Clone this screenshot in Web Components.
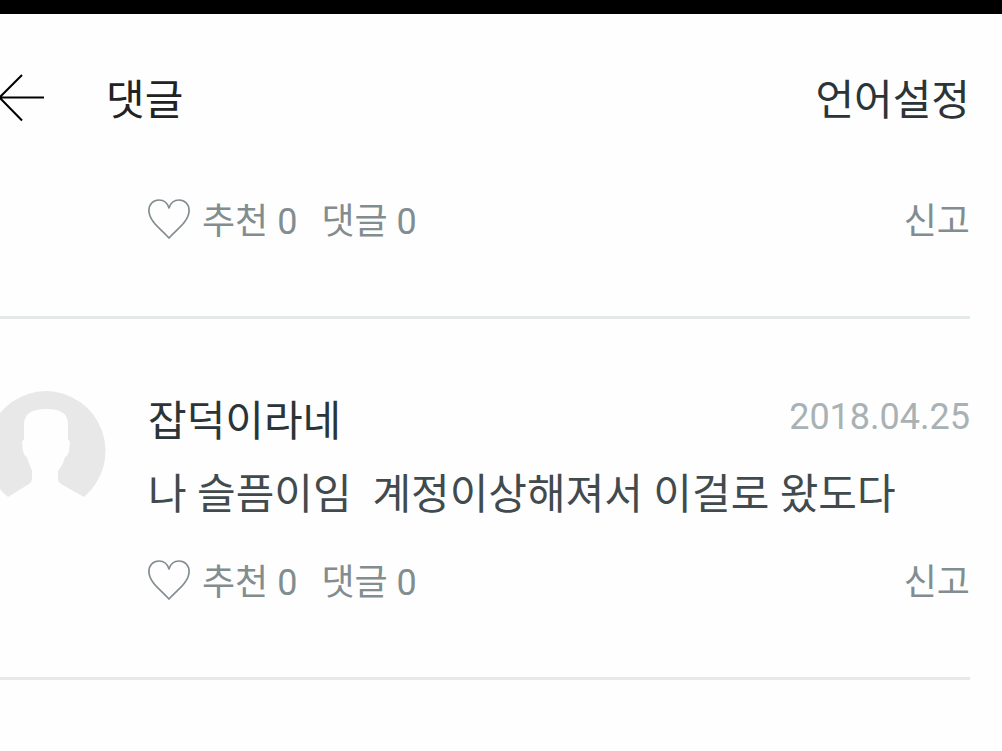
<!DOCTYPE html>
<html lang="ko">
<head>
<meta charset="utf-8">
<meta name="viewport" content="width=device-width, initial-scale=1">
<title>댓글</title>
<style>
body { margin: 0; background: #fefefe; font-family: Roboto, "Noto Sans CJK KR", sans-serif; }
</style>
</head>
<body>
<comment-page>
  <page-header>댓글<span slot="action">언어설정</span></page-header>
  <comment-item likes="0" replies="0"></comment-item>
  <comment-item likes="0" replies="0" author="잡덕이라네" date="2018.04.25">나 슬픔이임  계정이상해져서 이걸로 왔도다</comment-item>
</comment-page>
<script>
const define = (name, html, setup) => customElements.define(name, class extends HTMLElement {
  connectedCallback() {
    if (this.shadowRoot) return;
    const t = document.createElement('template');
    t.innerHTML = html;
    this.attachShadow({ mode: 'open' }).append(t.content.cloneNode(true));
    if (setup) setup(this, this.shadowRoot);
  }
});

define('comment-page', `
<style>
:host { display: block; border-top: 14px solid #000; }
main { display: block; }
</style>
<main><slot></slot></main>`);

define('page-header', `
<style>
:host { display: flex; align-items: center; height: 168px; padding-right: 32px; color: #222; }
button { font: inherit; color: inherit; background: none; border: 0; padding: 0; cursor: pointer; }
.back { display: flex; width: 106px; color: #000; }
h1 { flex: 1; margin: 0; padding-top: 6px; font-size: 42px; line-height: 72px; font-weight: 400; }
.action { padding-top: 6px; font-size: 42px; line-height: 72px; color: #2b3437; }
</style>
<button class="back" aria-label="뒤로"><svg width="46" height="50" viewBox="0 0 46 50" fill="none" stroke="currentColor" stroke-width="2"><path d="M44 24.500H0M22 2L-.5 24.500L22 47.500"/></svg></button>
<h1><slot></slot></h1>
<button class="action"><slot name="action"></slot></button>`);

define('heart-icon', `
<style>:host { display: block; } svg { display: block; }</style>
<svg width="42" height="42" viewBox="0 0 42 42" fill="none" stroke="currentColor" stroke-width="1.700" stroke-linejoin="round"><path d="M21 40C17.500 35.500 10.500 30.500 5.500 24C2 19.500 .9 16.500 .9 12.500C.9 6.500 5 2 11 2C16 2 19.500 5 21 10C22.500 5 26 2 31 2C37 2 41.100 6.500 41.100 12.500C41.100 16.500 40 19.500 36.500 24C31.500 30.500 24.500 35.500 21 40Z"/></svg>`);

define('user-avatar', `
<style>:host { display: block; } svg { display: block; }</style>
<svg width="106" height="120" viewBox="0 0 106 120" role="img" aria-label="프로필">
<path fill="#e8e8e8" d="M46 0A60 60 0 0 1 84 106L61 93Q58 91 58 88V80C61 76 64 71 65 66Q68 65 69 60L70 51Q70 49 68 49V33C68 22 60 18 46 18C32 18 24 23 24 33V49Q22 49 22 51L23 60Q24 65 27 66C28 71 31 76 32 80V88Q32 91 29 93L8 106A60 60 0 0 1 46 0Z"/></svg>`);

define('comment-item', `
<style>
:host { display: grid; grid-template-columns: 106px 1fr; column-gap: 42px; margin-right: 32px; padding: 16px 0 70px; border-bottom: 3px solid #e5e9e8; }
:host([author]) { padding-top: 66px; }
user-avatar { margin-top: 6px; }
:host(:not([author])) :is(user-avatar, .meta, p) { display: none; }
.content { grid-column: 2; }
.meta, .actions { display: flex; align-items: flex-start; justify-content: space-between; }
.name { font-size: 42px; line-height: 74px; color: #2b3437; }
time { font-size: 36px; line-height: 64px; color: #a8b2b4; }
p { margin: 0 0 28px; font-size: 42px; line-height: 72px; color: #414b4e; white-space: pre-wrap; }
button { display: flex; align-items: flex-start; gap: 12px; font: inherit; font-size: 36px; line-height: 48px; color: #828d90; background: none; border: 0; padding: 0; cursor: pointer; }
.group { display: flex; gap: 24px; }
</style>
<user-avatar></user-avatar>
<div class="content">
  <div class="meta"><span class="name"></span><time></time></div>
  <p><slot></slot></p>
  <div class="actions">
    <div class="group">
      <button><heart-icon></heart-icon><span class="likes"></span></button>
      <button class="replies"></button>
    </div>
    <button>신고</button>
  </div>
</div>`, (host, root) => {
  const get = name => host.getAttribute(name) || '';
  root.querySelector('.likes').textContent = '추천 ' + get('likes');
  root.querySelector('.replies').textContent = '댓글 ' + get('replies');
  if (host.hasAttribute('author')) {
    root.querySelector('.name').textContent = get('author');
    root.querySelector('time').textContent = get('date');
  }
});
</script>
</body>
</html>
